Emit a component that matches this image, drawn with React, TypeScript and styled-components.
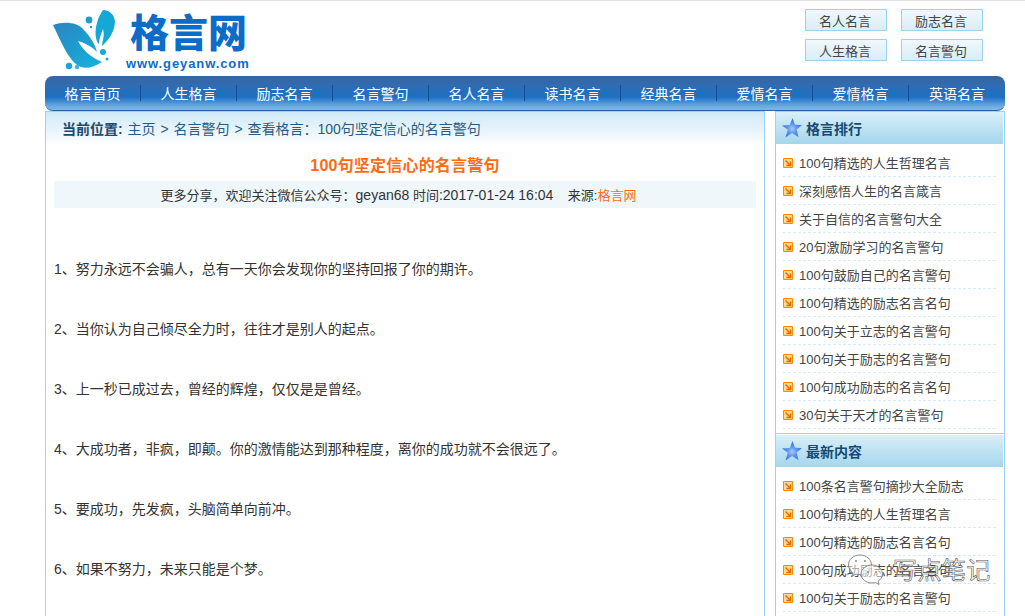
import React from "react";
import styled, { createGlobalStyle } from "styled-components";

const Global = createGlobalStyle`
  html, body { margin: 0; padding: 0; background: #fff; height: 616px; overflow: hidden; }
  body { font-family: "Liberation Sans", "Noto Sans CJK SC", sans-serif; font-size: 13px; color: #333; }
  * { box-sizing: border-box; }
`;

const Page = styled.div`
  position: relative;
  width: 1025px;
  height: 616px;
  overflow: hidden;
  border-top: 1px solid #e0e0e2;
`;
const Wrap = styled.div`
  width: 960px;
  margin-left: 45px;
`;
const Header = styled.header`
  height: 75px;
  display: flex;
  justify-content: space-between;
`;
const Logo = styled.div`
  display: flex;
  padding: 8px 0 0 7px;
  gap: 6px;
`;
const LogoWords = styled.div`
  display: flex;
  flex-direction: column;
  align-items: flex-start;
  margin-top: -2px;
`;
const LogoTitle = styled.div`
  font-family: "Noto Sans CJK SC", sans-serif;
  font-weight: 900;
  font-size: 39px;
  line-height: 46px;
  color: #0d6cc8;
  margin-left: 4px;
`;
const LogoUrl = styled.div`
  font-family: "Liberation Sans", sans-serif;
  font-weight: 700;
  font-size: 13px;
  line-height: 15px;
  letter-spacing: 0.9px;
  color: #0d6cc8;
  margin-top: 3px;
`;
const QuickLinks = styled.div`
  display: grid;
  grid-template-columns: 82px 82px;
  grid-auto-rows: 22px;
  column-gap: 14px;
  row-gap: 8px;
  padding: 8px 22px 0 0;
`;
const QuickLink = styled.a`
  display: flex;
  align-items: center;
  justify-content: center;
  padding: 0 2px 0 0;
  border: 1px solid #9bd3e8;
  background: linear-gradient(#f0f8fc, #d9edf8);
  font-size: 13px;
  color: #444;
`;
const Nav = styled.nav`
  height: 35px;
  display: flex;
  align-items: center;
  border-radius: 8px;
  border-bottom: 1px solid #2a64a8;
  background: linear-gradient(#39659f 0%, #2f6cb2 28%, #1c70c2 62%, #6aa8e2 88%, #7fb6ea 100%);
`;
const NavItem = styled.a<{ $last?: boolean }>`
  width: 96px;
  height: 16px;
  display: flex;
  align-items: center;
  justify-content: center;
  padding-bottom: 1px;
  color: #fff;
  font-size: 14px;
  border-right: ${(p) => (p.$last ? "none" : "1px solid #174f8d")};
`;
const Main = styled.div`
  display: flex;
  gap: 10px;
  align-items: flex-start;
`;
const Content = styled.main`
  width: 720px;
  height: 520px;
  border: 1px solid #9bd3e8;
  border-bottom: none;
`;
const Crumbs = styled.div`
  height: 32px;
  padding-left: 16px;
  display: flex;
  align-items: center;
  white-space: pre;
  word-spacing: 1px;
  background: linear-gradient(#cfe9f8, #fbfdfe);
  color: #2a5a84;
  font-size: 14px;
`;
const CrumbLabel = styled.b`
  font-weight: 700;
  color: #1c4a70;
`;
const Title = styled.h1`
  margin: 0;
  height: 37px;
  padding-top: 5px;
  text-align: center;
  font-size: 16px;
  line-height: 34px;
  font-weight: 700;
  letter-spacing: 0.2px;
  color: #ff6a13;
`;
const Meta = styled.div`
  margin: 0 8px;
  height: 27px;
  padding-right: 13px;
  display: flex;
  align-items: center;
  justify-content: center;
  background: #eff7fb;
  color: #333;
  font-size: 13px;
  white-space: pre;
`;
const MetaLatin = styled.span`
  font-size: 14px;
`;
const MetaSource = styled.span`
  color: #ff6a13;
`;
const Article = styled.div`
  padding: 31px 8px 0;
`;
const Para = styled.p`
  margin: 0;
  height: 60px;
  line-height: 60px;
  font-size: 14px;
  color: #333;
`;
const Side = styled.aside`
  width: 230px;
  height: 520px;
  border: 1px solid #9bd3e8;
  border-bottom: none;
`;
const SideSection = styled.section`
  & + & {
    margin-top: 1px;
  }
`;
const SideHead = styled.div`
  margin-right: 1px;
  height: 32px;
  padding-left: 6px;
  display: flex;
  align-items: center;
  gap: 4px;
  background: linear-gradient(#d8eff9, #a5d6ec);
  font-size: 14px;
  font-weight: 700;
  color: #174a73;
`;
const SideList = styled.ul`
  list-style: none;
  margin: 0;
  padding: 5px 8px 4px 7px;
  border-bottom: 1px solid #9bd3e8;
`;
const SideItem = styled.li`
  height: 28px;
  display: flex;
  align-items: center;
  gap: 6px;
  border-bottom: 1px dashed #d4eaf5;
  font-size: 13px;
  color: #444;
  white-space: nowrap;
`;
const Watermark = styled.div`
  position: absolute;
  left: 847px;
  top: 552px;
  display: flex;
  align-items: center;
  gap: 8px;
`;
const WatermarkText = styled.span`
  font-size: 24px;
  line-height: 34px;
  letter-spacing: 0.5px;
  color: rgba(255, 255, 255, 0.7);
  -webkit-text-stroke: 0.6px #555;
`;

const Bullet = () => (
  <svg width="10" height="10" viewBox="0 0 10 10" style={{ flex: "none" }}>
    <rect width="10" height="10" rx="1" fill="#ff8a00" />
    <rect x="1" y="1" width="8" height="8" fill="#ffd98a" />
    <path d="M2.500 2.500 7 7M7.500 3.500V7.500H3.500" stroke="#e56b00" strokeWidth="1.400" fill="none" />
  </svg>
);
const Star = ({ id }: { id: string }) => (
  <svg width="20" height="20" viewBox="0 0 20 20" style={{ flex: "none" }}>
    <defs>
      <radialGradient id={id} cx="0.5" cy="0.55" r="0.55">
        <stop offset="0" stopColor="#a9c8f8" />
        <stop offset="0.45" stopColor="#5c93ee" />
        <stop offset="1" stopColor="#2f6fe0" />
      </radialGradient>
    </defs>
    <path d="M10.500 0 13 6.800 20 7 14.600 11.500 16.500 19 10 15 3.500 19.500 5.800 11.800 0 7.500 7.800 7Z" fill={`url(#${id})`} />
  </svg>
);
const LogoMark = () => (
  <svg width="68" height="64" viewBox="0 0 68 64">
    <defs>
      <linearGradient id="lg" x1="0" y1="0" x2="1" y2="1">
        <stop offset="0" stopColor="#2a86bd" />
        <stop offset="1" stopColor="#13b2e0" />
      </linearGradient>
    </defs>
    <path d="M1 16C12 12 25 13 31 20C38 27 43 35 45 43C38 36 32 34 26 32C30 40 38 48 50 53C42 58 35 60 29 58C18 54 10 35 1 16Z" fill="url(#lg)" />
    <path d="M51 1C57 1 62 5 63 12C63 22 57 31 50 37C50 32 53 27 51 20C49 25 47 30 47 35C42 30 42 14 51 1Z" fill="#14a8d8" />
    <circle cx="37" cy="11" r="3.400" fill="#1f9bd0" />
    <circle cx="39" cy="18" r="1.200" fill="#1f9bd0" />
    <circle cx="51" cy="43" r="3" fill="#1aa6d8" />
    <circle cx="55" cy="50" r="1.500" fill="#1aa6d8" />
    <circle cx="17" cy="57" r="3.200" fill="#1aa6d8" />
    <circle cx="25" cy="58" r="2.300" fill="#45b4dc" />
  </svg>
);
const WeChat = () => (
  <svg width="38" height="35" viewBox="0 0 38 35" fill="rgba(255,255,255,0.55)" stroke="#8a8a8a" strokeWidth="1">
    <path d="M13 2C6.500 2 1.500 6.500 1.500 12c0 3 1.700 5.700 4.200 7.500L5 23l4-2c1.300.4 2.500.5 4 .5 6.500 0 11.500-4.300 11.500-9.500S19.500 2 13 2Z" />
    <path d="M25 12c-6 0-11 4-11 9s5 9 11 9c1.300 0 2.500-.2 3.500-.5l3.500 2-1-3.300c2.700-1.600 4.500-4.200 4.500-7.200 0-5-4.500-9-10.500-9Z" />
    <circle cx="9" cy="8" r="1" fill="#8a8a8a" stroke="none" />
    <circle cx="18" cy="8" r="1" fill="#8a8a8a" stroke="none" />
    <circle cx="21" cy="19" r=".9" fill="#8a8a8a" stroke="none" />
    <circle cx="29" cy="19" r=".9" fill="#8a8a8a" stroke="none" />
  </svg>
);

const quick = ["名人名言", "励志名言", "人生格言", "名言警句"];
const nav = ["格言首页", "人生格言", "励志名言", "名言警句", "名人名言", "读书名言", "经典名言", "爱情名言", "爱情格言", "英语名言"];
const paras = [
  "1、努力永远不会骗人，总有一天你会发现你的坚持回报了你的期许。",
  "2、当你认为自己倾尽全力时，往往才是别人的起点。",
  "3、上一秒已成过去，曾经的辉煌，仅仅是是曾经。",
  "4、大成功者，非疯，即颠。你的激情能达到那种程度，离你的成功就不会很远了。",
  "5、要成功，先发疯，头脑简单向前冲。",
  "6、如果不努力，未来只能是个梦。",
];
const rank = ["100句精选的人生哲理名言", "深刻感悟人生的名言箴言", "关于自信的名言警句大全", "20句激励学习的名言警句", "100句鼓励自己的名言警句", "100句精选的励志名言名句", "100句关于立志的名言警句", "100句关于励志的名言警句", "100句成功励志的名言名句", "30句关于天才的名言警句"];
const latest = ["100条名言警句摘抄大全励志", "100句精选的人生哲理名言", "100句精选的励志名言名句", "100句成功励志的名言名句", "100句关于励志的名言警句"];

const Section = ({ id, title, items }: { id: string; title: string; items: string[] }) => (
  <SideSection>
    <SideHead><Star id={id} />{title}</SideHead>
    <SideList>
      {items.map((t) => (
        <SideItem key={t}><Bullet />{t}</SideItem>
      ))}
    </SideList>
  </SideSection>
);

export default function App() {
  return (
    <Page>
      <Global />
      <Wrap>
        <Header>
          <Logo>
            <LogoMark />
            <LogoWords>
              <LogoTitle>格言网</LogoTitle>
              <LogoUrl>www.geyanw.com</LogoUrl>
            </LogoWords>
          </Logo>
          <QuickLinks>
            {quick.map((q) => <QuickLink key={q}>{q}</QuickLink>)}
          </QuickLinks>
        </Header>
        <Nav>
          {nav.map((n, i) => <NavItem key={n} $last={i === nav.length - 1}>{n}</NavItem>)}
        </Nav>
        <Main>
          <Content>
            <Crumbs><CrumbLabel>当前位置: </CrumbLabel>主页 &gt; 名言警句 &gt; 查看格言：100句坚定信心的名言警句</Crumbs>
            <Title>100句坚定信心的名言警句</Title>
            <Meta>更多分享，欢迎关注微信公众号：<MetaLatin>geyan68</MetaLatin> 时间<MetaLatin>:2017-01-24 16:04</MetaLatin>    来源:<MetaSource>格言网</MetaSource></Meta>
            <Article>
              {paras.map((p) => <Para key={p}>{p}</Para>)}
            </Article>
          </Content>
          <Side>
            <Section id="star-rank" title="格言排行" items={rank} />
            <Section id="star-new" title="最新内容" items={latest} />
          </Side>
        </Main>
      </Wrap>
      <Watermark>
        <WeChat />
        <WatermarkText>写点笔记</WatermarkText>
      </Watermark>
    </Page>
  );
}
